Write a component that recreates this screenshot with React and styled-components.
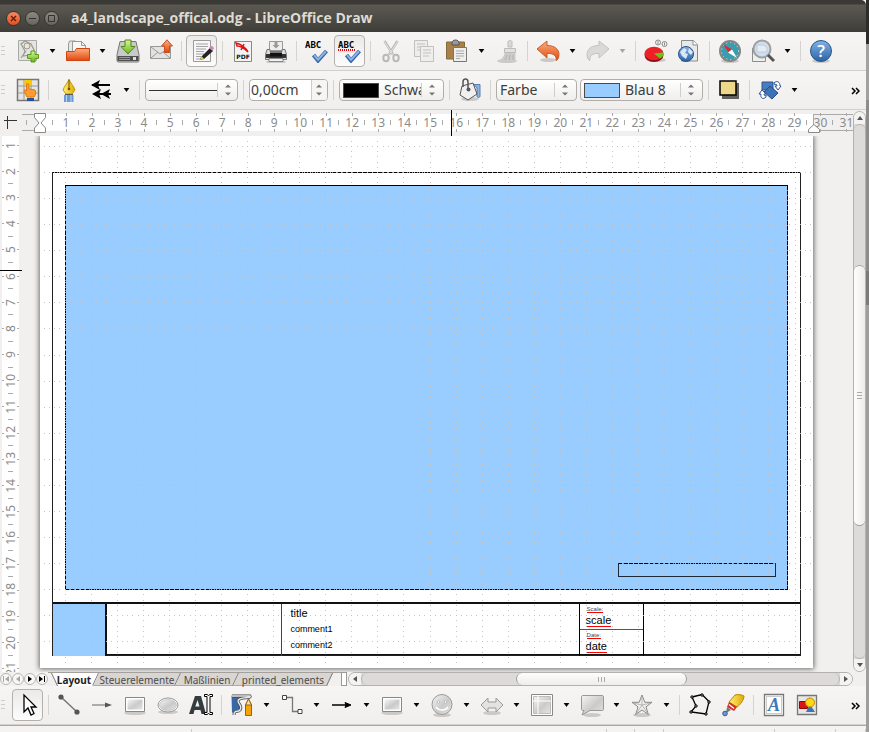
import React from "react";
import styled, { createGlobalStyle, css } from "styled-components";

const GlobalStyle = createGlobalStyle`
  * { box-sizing: border-box; }
  html, body { margin: 0; overflow: hidden; background: #969492; }
  body, button, input, select { font-family: "Noto Sans", "Open Sans", sans-serif; }
  button { border: 0; padding: 0; background: none; color: inherit; }
`;

/* ---------- window ---------- */
const Desktop = styled.div`
  min-height: 100vh;
  padding-right: 3px;
  background: linear-gradient(180deg, #2d2c29 0 44px, #a3a19f 44px 100px, #8e8c8a 100px 271px, #7c7a78 271px 305px, #a09e9c 305px);
`;
const Window = styled.main`
  display: flex;
  flex-direction: column;
  min-height: 100vh;
  background: #f1f0ee;
`;
const TitleBar = styled.header`
  display: flex;
  align-items: center;
  gap: 4px;
  height: 32px;
  padding: 4px 6px 0;
  border-radius: 0 5px 0 0;
  background: linear-gradient(180deg, #3a3935 0 4px, #5b5952 5px, #3e3d38 100%);
`;
const WindowButton = styled.button`
  display: grid;
  place-items: center;
  width: 15px;
  height: 15px;
  border-radius: 50%;
  border: 1px solid #33322e;
  background: ${(p) => (p.$close ? "linear-gradient(#f58a66, #e2501d)" : "linear-gradient(#8b8981, #66645d)")};
`;
const Title = styled.h1`
  margin: 0 0 0 8px;
  font-family: "Open Sans", "Noto Sans", sans-serif;
  font-size: 14px;
  line-height: 20px;
  font-weight: 700;
  color: #dfdbd2;
  white-space: nowrap;
`;

/* ---------- toolbars ---------- */
const Toolbar = styled.div`
  display: flex;
  align-items: center;
  height: 39px;
  border-bottom: 1px solid #d2d0cd;
  background: linear-gradient(180deg, #f6f5f4, #f0efed);
  overflow: hidden;
`;
const Grip = styled.span`
  flex: 0 0 11px;
  height: 10px;
  background: repeating-linear-gradient(180deg, #cfcdca 0 1px, transparent 1px 4px) 1px 0 / 4px 100% no-repeat;
`;
const ToolButton = styled.button`
  display: grid;
  place-items: center;
  flex: 0 0 31px;
  height: 32px;
  margin: 0 1px;
  border-radius: 4px;
  ${(p) => p.$on && css`
    border: 1px solid #b4b1ac;
    background: linear-gradient(180deg, #eceae8, #fcfcfc);
  `}
`;
const CaretButton = styled.button`
  display: grid;
  place-items: center;
  flex: 0 0 17px;
  height: 32px;
  color: ${(p) => (p.$off ? "#a5a3a0" : "#000")};
`;
const Divider = styled.span`
  flex: 0 0 8px;
  height: 20px;
  background: linear-gradient(#d5d3d0, #d5d3d0) 4px 0 / 1px 100% no-repeat;
`;
const More = styled.button`
  margin-left: auto;
  width: 22px;
  height: 24px;
`;
const Field = styled.div`
  display: flex;
  align-items: center;
  flex: 0 0 ${(p) => p.$w}px;
  height: 22px;
  margin: 0 1px 0 2px;
  padding-left: ${(p) => (p.$white ? 1 : 3)}px;
  border: 1px solid #b1aea9;
  border-radius: 4px;
  background: ${(p) => (p.$white ? "#fff" : "linear-gradient(180deg, #fff, #efeeec)")};
  overflow: hidden;
`;
const fieldText = css`
  flex: 1 1 0;
  min-width: 0;
  height: 20px;
  padding: 0;
  border: 0;
  outline: 0;
  background: transparent;
  color: #3c3c3c;
  font-size: 14px;
  line-height: 20px;
`;
const Select = styled.select`
  ${fieldText}
  appearance: none;
  text-overflow: clip;
`;
const TextInput = styled.input`${fieldText}`;
const Swatch = styled.span`
  flex: 0 0 36px;
  height: 15px;
  margin-right: 5px;
  border: 1px solid #4a4a4a;
  background: ${(p) => p.$color};
`;
const LineSample = styled.span`
  flex: 0 0 68px;
  height: 1px;
  background: #333;
`;
const Stepper = styled.span`
  display: grid;
  place-items: center;
  flex: 0 0 ${(p) => p.$w || 22}px;
  padding-right: 2px;
  align-self: stretch;
  margin: ${(p) => (p.$full ? "0" : "3px 0")};
  border-left: 1px solid #cfcdca;
  background: ${(p) => (p.$full ? "#f6f5f4" : "none")};
`;

/* ---------- workspace ---------- */
const Workspace = styled.section`
  display: grid;
  grid-template-columns: 22px minmax(0, 1fr) 13px;
  grid-template-rows: 26px auto;
`;
const Corner = styled.div`
  padding: 5px 0 0 4px;
  line-height: 0;
`;
const HRuler = styled.div`
  position: relative;
  display: flex;
  padding: 3px 0 0;
  overflow: hidden;
  height: 26px;
`;
const RulerMargin = styled.div`
  flex: 0 0 ${(p) => p.$w}px;
  height: 17px;
  margin-top: 1px;
  border: solid #aaa;
  border-width: 1px 0 1px ${(p) => (p.$edge ? 1 : 0)}px;
  background: ${(p) => (p.$edge ? "none" : "linear-gradient(#aaa, #aaa) 4px 5px / 1px 5px no-repeat")};
`;
const HScale = styled.div`
  display: flex;
  flex: 1 1 0;
  min-width: 0;
  height: 19px;
  background: linear-gradient(#fff, #fff) 0 1px / 100% 17px no-repeat;
`;
const HHalf = styled.span`
  flex: 0 0 calc(100% / 59.4);
  background: linear-gradient(#aaa, #aaa) 100% 7px / 1px 5px no-repeat;
`;
const HCell = styled.span`
  position: relative;
  flex: 0 0 calc(100% / 29.7);
  text-align: center;
  font-size: 12px;
  line-height: 19px;
  color: #8b8b8b;
  background:
    linear-gradient(#aaa, #aaa) 50% 0 / 1px 3px no-repeat,
    linear-gradient(#aaa, #aaa) 50% 100% / 1px 3px no-repeat,
    linear-gradient(#aaa, #aaa) 100% 7px / 1px 5px no-repeat;
`;
const Indent = styled.span`
  position: absolute;
  top: 3px;
  line-height: 0;
  ${(p) => (p.$end ? "right: 33px;" : "left: 12px;")}
`;
const PointerMark = styled.span`
  position: absolute;
  background: #000;
  ${(p) => (p.$v ? "left: 0; right: 0; top: 134px; height: 1px;" : "top: 0; bottom: 0; left: 429px; width: 1px;")}
`;
const VRuler = styled.div`
  position: relative;
  overflow: hidden;
  contain: size;
`;
const VScale = styled.div`
  display: flex;
  flex-direction: column;
  height: calc(100% + 14px);
  margin: -4px 3px 0 2px;
  background: #fff;
`;
const VCell = styled.span`
  display: grid;
  place-items: center;
  flex: 1 1 0;
  min-height: 0;
  background:
    linear-gradient(#aaa, #aaa) 0 50% / 2px 1px no-repeat,
    linear-gradient(#aaa, #aaa) 100% 50% / 2px 1px no-repeat,
    linear-gradient(#aaa, #aaa) 50% 100% / 5px 1px no-repeat;
`;
const VNumber = styled.span`
  writing-mode: vertical-rl;
  transform: rotate(180deg);
  font-size: 12px;
  line-height: 17px;
  color: #8b8b8b;
`;
const Canvas = styled.div`
  padding: 0 40px 4px 18px;
  overflow: hidden;
  background: #f1f0ee;
`;
const Page = styled.article`
  position: relative;
  display: flex;
  aspect-ratio: 773 / 532;
  padding: 36px 12px 12px;
  background: #fff;
  box-shadow: 0 0 5px 1px #6d6b69;
`;
const dashH = "repeating-linear-gradient(90deg, #000 0 4px, #8a8a8a 4px 5px)";
const dashV = "repeating-linear-gradient(180deg, #000 0 4px, #8a8a8a 4px 5px)";
const Frame = styled.div`
  display: flex;
  flex: 1;
  flex-direction: column;
  border: solid #222;
  border-width: 0 1px 1px;
  background: ${dashH} 0 0 / 100% 1px no-repeat;
`;
const DrawArea = styled.div`
  display: flex;
  flex: 1;
  align-items: flex-end;
  justify-content: flex-end;
  margin: 13px 12px 12px;
  padding: 13px 12px;
  border-top: 1px solid #000;
  background:
    ${dashV} 0 0 / 1px 100% no-repeat,
    ${dashV} 100% 0 / 1px 100% no-repeat,
    ${dashH} 0 100% / 100% 1px no-repeat,
    #99ccff;
`;
const EmptyBox = styled.div`
  width: 158px;
  height: 14px;
  border: solid #1c2a38;
  border-width: 0 1px 1px;
  background: ${dashH} 0 0 / 100% 1px no-repeat;
`;
const TitleBlock = styled.div`
  display: grid;
  grid-template-columns: 54fr 176fr 298fr 65fr 156fr;
  height: 53px;
  border: solid #111;
  border-width: 2px 0 1px;
`;
const Cell = styled.div`
  border-right: ${(p) => p.$line || 0}px solid ${(p) => p.$ink || "#444"};
  background: ${(p) => p.$fill || "transparent"};
  padding: ${(p) => p.$pad || "0"};
  font-family: "Liberation Sans", Arial, sans-serif;
  color: #000;
`;
const Half = styled.div`
  height: 26px;
  padding: 2px 0 0 6px;
  border-bottom: ${(p) => (p.$rule ? 1 : 0)}px solid #555;
`;
const Line = styled.p`
  margin: 0;
  font-size: ${(p) => p.$size}px;
  line-height: 16px;
`;
const Checked = styled.span`
  display: block;
  width: fit-content;
  margin-left: ${(p) => (p.$small ? 1 : 0)}px;
  font-size: ${(p) => (p.$small ? 6 : 11)}px;
  line-height: ${(p) => (p.$small ? 6 : 11)}px;
  border-bottom: 1px solid #f00;
  color: ${(p) => (p.$small ? "#445" : "#000")};
  & + & { margin-top: 2px; }
`;
const GridOverlay = styled.svg`
  position: absolute;
  inset: 0;
  width: 100%;
  height: 100%;
  pointer-events: none;
`;

/* ---------- scroll bars ---------- */
const ScrollBar = styled.div`
  display: flex;
  flex-direction: ${(p) => (p.$v ? "column" : "row")};
  border: 1px solid #b5b2ae;
  border-radius: 7px;
  background: #dddbd9;
  color: #555;
  overflow: hidden;
  ${(p) => (p.$v ? "grid-column: 3; grid-row: 1 / 3; margin-top: 1px;" : "flex: 1; height: 14px; margin-right: 13px;")}
`;
const ScrollArrow = styled.button`
  display: grid;
  place-items: center;
  flex: 0 0 12px;
  background: #f4f3f2;
`;
const Track = styled.div`
  display: grid;
  flex: 1;
  ${(p) => (p.$v ? "grid-template-rows: 141fr 263fr 133fr;" : "grid-template-columns: 155fr 171fr 153fr;")}
  border: solid #b5b2ae;
  border-width: ${(p) => (p.$v ? "1px 0" : "0 1px")};
  border-radius: 7px;
`;
const Thumb = styled.div`
  display: grid;
  place-items: center;
  border: solid #a19e9a;
  border-width: ${(p) => (p.$v ? "1px 0" : "0 1px")};
  border-radius: 6px;
  background: linear-gradient(${(p) => (p.$v ? 90 : 180)}deg, #fdfdfd, #eeedeb);
  ${(p) => (p.$v ? "grid-row: 2;" : "grid-column: 2;")}
`;

/* ---------- sheet tabs ---------- */
const BottomRow = styled.div`
  display: flex;
  height: 14px;
  align-items: stretch;
`;
const NavButton = styled.button`
  display: grid;
  place-items: center;
  flex: 0 0 12px;
  height: 12px;
  margin: 1px 0 0;
  border: 1px solid #b9b6b2;
  border-radius: 6px;
  background: #f8f7f6;
  color: ${(p) => (p.$off ? "#a8a6a3" : "#000")};
`;
const TabList = styled.div`
  display: flex;
  flex: 0 0 293px;
  padding-left: 4px;
  border-top: 1px solid #a4a19d;
`;
const Tab = styled.button`
  position: relative;
  z-index: 0;
  flex: 0 0 ${(p) => p.$w}px;
  height: 13px;
  font-size: 10px;
  line-height: 12px;
  font-weight: ${(p) => (p.$active ? 700 : 400)};
  color: ${(p) => (p.$active ? "#222" : "#4c4c4c")};
  white-space: nowrap;
  &::before {
    content: "";
    position: absolute;
    z-index: -1;
    inset: 0 0 0 ${(p) => (p.$active ? 12 : 0)}px;
    transform: skewX(-25deg);
    border-right: 1px solid #777;
    border-bottom: 1px solid ${(p) => (p.$active ? "#fff" : "#aaa")};
    background: ${(p) => (p.$active ? "#fff" : "#d8d5d2")};
  }
  &::after {
    content: "";
    position: absolute;
    z-index: -1;
    inset: 0 12px 0 2px;
    transform: skewX(25deg);
    display: ${(p) => (p.$active ? "block" : "none")};
    border-left: 1px solid #777;
    background: #fff;
  }
`;
const Splitter = styled.span`
  flex: 0 0 6px;
  margin-right: 1px;
  border: 1px solid #999;
  background: #fff;
`;
const StatusBar = styled.footer`
  display: flex;
  height: 7px;
  border-top: 1px solid #aaa8a5;
  padding-top: 3px;
  background: #f4f3f2;
`;
const StatusCell = styled.span`
  flex: ${(p) => p.$w} 1 0;
  border-right: 1px solid #cccac7;
  padding-left: ${(p) => p.$pad || 0}px;
  line-height: 0;
`;

/* ---------- icons ---------- */
const Svg = ({ children, w = 24, h = 24 }) => (
  <svg width={w} height={h} viewBox={`0 0 ${w} ${h}`} fill="none" aria-hidden="true">{children}</svg>
);
const HiddenSvg = styled.svg`
  position: absolute;
`;
const Defs = () => (
  <HiddenSvg width="0" height="0" aria-hidden="true">
    <defs>
      <linearGradient id="gray" x1="0" y1="0" x2="1" y2="1"><stop stopColor="#f5f5f5" /><stop offset=".55" stopColor="#cacaca" /><stop offset="1" stopColor="#e4e4e4" /></linearGradient>
      <linearGradient id="orange" x1="0" y1="0" x2="0" y2="1"><stop stopColor="#fbb080" /><stop offset="1" stopColor="#e2470f" /></linearGradient>
      <linearGradient id="green" x1="0" y1="0" x2="0" y2="1"><stop stopColor="#d8f59a" /><stop offset="1" stopColor="#67b51c" /></linearGradient>
      <linearGradient id="blue" x1="0" y1="0" x2="0" y2="1"><stop stopColor="#82b3e6" /><stop offset="1" stopColor="#2c62a4" /></linearGradient>
      <linearGradient id="gold" x1="0" y1="0" x2="1" y2="0"><stop stopColor="#fff27a" /><stop offset="1" stopColor="#e2a800" /></linearGradient>
    </defs>
  </HiddenSvg>
);
const Shadow = ({ y = 22, rx = 9 }) => <ellipse cx="12" cy={y} rx={rx} ry="2" fill="#000" opacity=".16" />;
const AbcLabel = () => <text x="0" y="9" fontSize="9" fontWeight="700" fontFamily="DejaVu Sans Mono" fill="#000">ABC</text>;
const BlueCheck = () => <><path d="M8.500 16l4.500 5.500L21.500 12" stroke="#3566a4" strokeWidth="4" /><path d="M9 16.200l4 4.500 8-8.500" stroke="#8bb5ea" strokeWidth="2" /></>;

const icons = {
  newDoc: <><path d="M2.5 1.5h18v20h-18z" fill="#e4e4e1" stroke="#a8a8a4" /><path d="M5 5l4-3 6 3 3 6-4 5-7 1 2-5zM5 19l5-7" stroke="#9a9a90" strokeWidth="1.2" /><circle cx="11" cy="7" r="3" fill="#efe6c8" stroke="#999" /><path d="M15 12h4v3.500h3.500v4H19V23h-4v-3.500h-3.500v-4H15z" fill="url(#green)" stroke="#5b9a1b" /></>,
  open: <><path d="M2.500 13V5l1-3h6l2 2h2v9z" fill="#e7e7e7" stroke="#999" /><path d="M6.500 2.500h9l4 4V14h-13z" fill="#f7f7f7" stroke="#999" /><path d="M15.500 2.500v4h4" stroke="#999" /><path d="M.5 21.500v-9h8l2-3h13v12z" fill="url(#orange)" stroke="#cf450f" /></>,
  save: <><path d="M4 2.500h16l3 13v6c0 1-.5 1.500-1.500 1.500h-19C1.500 23 1 22.500 1 21.500v-6z" fill="#c9c9c9" stroke="#777" /><path d="M1.500 17h21v5h-21z" fill="#4f4f4f" /><path d="M3 18.500h11M3 20.500h11" stroke="#999" /><path d="M17 18h3v3h-3z" fill="#ddd" /><path d="M9 1h6v6.500h4L12 15 5 7.500h4z" fill="url(#green)" stroke="#4f8a16" /></>,
  mail: <><path d="M1.500 7.500h20v12h-20z" fill="#e2e2e2" stroke="#999" /><path d="M2 8l9 7 10-7M2 19l7-6M21 19l-7-6" stroke="#999" /><path d="M15.500 13.500V7h-3L18 .8 23.500 7h-3v6.500z" fill="url(#orange)" stroke="#c94d18" /></>,
  edit: <><path d="M3.500 1.500h17v21h-17z" fill="#f7f7f7" stroke="#9a9a9a" /><path d="M6 5h12M6 7.500h12M6 10h10M6 12.500h8M6 15h8M6 17.500h5M6 20h5" stroke="#a2a2a2" /><path d="M11 18l9-9 3 3-9 8-4 1z" fill="#222" /><path d="M11.500 17l2.500 3-4 1z" fill="#edca45" /><path d="M19 9l2-2c1-.5 3 1 3 2.500l-2 2z" fill="#d184b8" /></>,
  pdf: <><path d="M3.500 2.500h17v20h-17z" fill="#f4f4f4" stroke="#888" /><path d="M5 4c5 1 10 5 12 9-4-4-7-6-11-6zM13 5l-3 6" stroke="#e01414" strokeWidth="1.500" /><text x="12" y="20" textAnchor="middle" fontSize="6" fontWeight="700" fontFamily="DejaVu Sans" fill="#111">PDF</text></>,
  print: <><Shadow y="23" rx="10" /><path d="M5.500 2.500h13v9h-13z" fill="#eee" stroke="#999" /><path d="M10.500 3h3v3h2L12 9.500 8.500 6h2z" fill="#999" /><path d="M3 10.500h3v2h12v-2h3l1.500 5v5h-21v-5z" fill="#ddd" stroke="#777" /><path d="M2 15h20v4H2z" fill="#333" /><path d="M6 13.500h12v4H6z" fill="#111" /><path d="M5 19.500h14v3H5z" fill="#f0f0f0" stroke="#888" /></>,
  abc: <><AbcLabel /><BlueCheck /></>,
  abcAuto: <><AbcLabel /><path d="M0 11h18" stroke="#e00" strokeWidth="2" strokeDasharray="1 1" /><BlueCheck /></>,
  cut: <g stroke="#b9b8b6"><path d="M5.500 2L14 15.500M18.500 2L10 15.500" strokeWidth="2.500" /><path d="M5.500 2.500L13.500 15M18.500 2.500L10.500 15" stroke="#e5e4e2" /><ellipse cx="7" cy="19" rx="2.700" ry="3.200" strokeWidth="2" /><ellipse cx="17" cy="19" rx="2.700" ry="3.200" strokeWidth="2" /></g>,
  copy: <g stroke="#c2c1bf"><path d="M2.500 1.500h13v16h-13z" fill="#ededeb" /><path d="M5 5h8M5 8h8M5 11h4" /><path d="M8.500 7.500h13v15h-13z" fill="#efeeed" /><path d="M11 11h8M11 14h8M11 17h6" /></g>,
  paste: <><path d="M1.500 3h18v17h-18z" fill="#a88049" stroke="#86683e" /><path d="M7 4c0-4 7-4 7 0v2H7z" fill="#999" stroke="#555" /><path d="M8.500 8.500h13v14h-13z" fill="#eee" stroke="#777" /><path d="M11 12h8M11 14.500h8M11 17h8M11 19.500h4" stroke="#aaa" /></>,
  brush: <><Shadow y="22" rx="10" /><path d="M13 8V3c0-2 4-2 4 0v5z" fill="#dad9d7" stroke="#bdbcba" /><path d="M9.500 9.500h11v4h-11z" fill="#e2e1df" stroke="#bdbcba" /><path d="M9.500 14h11v8H2c4-1 7-4 7.500-8z" fill="#cccbc9" /><path d="M12 16l-2 5M15 16l-1 5M18 16v5" stroke="#b3b2b0" /></>,
  undo: <><Shadow y="21" rx="8" /><path d="M1 10L11 2v4.500c8 0 12 4 12 9 0 4-2 6-3 6 1-5-3-7.500-9-7V19z" fill="url(#orange)" stroke="#c6612d" /></>,
  redo: <path d="M23 10L13 2v4.500c-8 0-12 4-12 9 0 4 2 6 3 6-1-5 3-7.500 9-7V19z" fill="#dad9d7" stroke="#c3c2c0" />,
  chart: <><Shadow y="21" rx="10" /><ellipse cx="10" cy="16" rx="9.500" ry="7" fill="#8a0c10" /><ellipse cx="10" cy="14.500" rx="9.500" ry="6.700" fill="#ee2027" /><path d="M10 14.500l9-1c1 3-1 5-3 6z" fill="#62c818" /><g fill="#f4f4f4" stroke="#888"><circle cx="14" cy="3.500" r="2.500" /><circle cx="20.500" cy="5" r="2.500" /><path d="M14 2v3M20.500 3.500v3" /></g></>,
  web: <><path d="M4.500 1.500h12l4 4V22h-16z" fill="#e9e9e8" stroke="#8b8b8b" /><path d="M16 1.500v4.500h5" stroke="#8b8b8b" fill="#fff" /><circle cx="9" cy="15" r="7.500" fill="url(#blue)" stroke="#275488" /><path d="M3 13l4-4 3 2-2 3 3 1-2 5-4-3zM12 9l4 4-2 3-3-3z" fill="#d8e8f9" /></>,
  compass: <><Shadow y="22" rx="9" /><circle cx="12" cy="12" r="10" fill="#399db0" stroke="#858585" strokeWidth="2" /><circle cx="12" cy="12" r="8.500" stroke="#d8e8eb" strokeDasharray="1 3" /><path d="M5 5l9 5.500-3.500 3z" fill="#e7252d" /><path d="M19 19L10 13.500l4-3z" fill="#fff" /></>,
  find: <><path d="M1.500 9h13v13.500h-13z" fill="#eee" stroke="#8d8d8d" /><circle cx="11" cy="10" r="8.500" fill="#cfdeed" stroke="#a0a0a0" strokeWidth="2" /><path d="M6 6h7l3 3v4H6z" fill="#e3ebf3" stroke="#bccbd9" /><path d="M17 16l6 6" stroke="#555" strokeWidth="3" /></>,
  help: <><Shadow y="22" rx="9" /><circle cx="12" cy="12" r="10.500" fill="url(#blue)" stroke="#245789" /><text x="12" y="18" textAnchor="middle" fontSize="17" fontFamily="Open Sans" fontWeight="600" fill="#fff">?</text></>,
  styles: <><path d="M1.500 1.500h21v21h-21z" fill="#e4e4e2" stroke="#777" strokeWidth="1.500" /><path d="M8 2v20M15 2v20M2 8h20M2 15h20" stroke="#999" /><path d="M8.500 2h6.500v6H8.500z" fill="#f6c900" /><path d="M10.500 6c1-1 2.500 0 2.500 1v4l6 1c1 1 1 5-1 7h-7l-3-6c0-2 1.500-1 2.500 0z" fill="#ff9c2f" stroke="#e07a12" /><path d="M11 20h7v3h-7z" fill="#244f93" /></>,
  pen: <><path d="M7 17h9.500v7H7z" fill="#6b9bd6" /><path d="M9.500 17v7M14 17v7" stroke="#b9d4f2" /><path d="M12 1c1 4 5 7 6 11l-3 4H9l-3-4c1-4 5-7 6-11z" fill="url(#gold)" stroke="#c99a00" /><path d="M12 2v8" stroke="#6b5206" /><circle cx="12" cy="11" r="1.300" fill="#6b5206" /><path d="M8 16.500h8" stroke="#555" /></>,
  arrowEnds: <><path d="M2 7h18M4 16h17" stroke="#000" strokeWidth="2" /><path d="M1 7l9-5-2 5 2 5zM2 16l9-5-2 5 2 5zM11 16l9-5-2 5 2 5z" fill="#000" /></>,
  bucket: <><Shadow y="21" rx="9" /><path d="M16 6.500h6V18c0 2-3 2-3 0v-8z" fill="#8eb3df" stroke="#577fae" /><path d="M4 8l11-3 4 11-9 6-8-5z" fill="#f0f0f0" stroke="#555" /><path d="M5 9V4c0-4 5-4 5 0v7" stroke="#555" strokeWidth="1.500" /><circle cx="10.500" cy="11.500" r="2" fill="#555" /></>,
  shadow: <><path d="M5 5h17v16H5z" fill="#000" opacity=".6" /><path d="M3 3h16v14H3z" fill="#ecd78b" stroke="#000" strokeWidth="1.500" /></>,
  rotate: <><path d="M4 4h11v8H4z" fill="#4a7cc0" stroke="#2b5590" /><path d="M12 8l8 7-6 6-8-7z" fill="#3c72b8" stroke="#244e88" /><path d="M16 5c3-3 6-1 6 3h1l-3 4-3-4h2c0-2-1-2-2-1zM8 19c-3 3-6 1-5-3H1l3-4 4 4H6c0 2 1 2 2 1z" fill="#fff" stroke="#2b5590" /></>,
  select: <path d="M8 2v17l4-4 3 7 3-1.500-3-6.500h5z" fill="#fff" stroke="#000" strokeWidth="1.300" />,
  line: <><path d="M4 4l16 15" stroke="#777" strokeWidth="1.500" /><circle cx="4" cy="4" r="2.600" fill="#555" /><circle cx="20" cy="19" r="2.600" fill="#555" /></>,
  lineArrow: <><path d="M2 12h15" stroke="#666" /><path d="M15 9.500l7 2.500-7 2.500z" fill="#555" /></>,
  rect: <><Shadow y="20" rx="11" /><path d="M2.500 4.500h19v14h-19z" fill="#fff" stroke="#888" /><path d="M4.500 6.500h15v10h-15z" fill="url(#gray)" /></>,
  ellipse: <><Shadow y="19" rx="10" /><ellipse cx="12" cy="12" rx="10" ry="7" fill="#fff" stroke="#999" /><ellipse cx="12" cy="12" rx="8.500" ry="5.500" fill="url(#gray)" stroke="#bbb" strokeWidth=".7" /></>,
  text: <><path d="M0 21L6 3h6l5 18h-4.500l-1-4h-6l-1 4zM6.300 13.500h4.200L8.500 7z" fill="#343c40" /><path d="M15.500 1.500H18l1.500 1 1.500-1h2.500v2H21v16h2.500v2H21l-1.500-1-1.500 1h-2.500v-2H18v-16h-2.500z" fill="#fff" stroke="#000" /></>,
  curve: <><path d="M1.500 2.500H15C7 4 4 9 11 14c1 2-6 3-9 6z" fill="#3769a8" /><path d="M2 3h18c2 3-12 0-12 5 0 3 5 5 2 9-2 3-6-1-6 5" stroke="#444" strokeWidth="3" /><path d="M2 3h18c2 3-12 0-12 5 0 3 5 5 2 9-2 3-6-1-6 5" stroke="#e4e4e4" strokeWidth="1.500" /><path d="M15.500 12l3-6 3 6v10.500h-6z" fill="#f5a30a" stroke="#9b650b" /><path d="M15.500 12l3-6 3 6z" fill="#f7dfae" stroke="#9b650b" /></>,
  connector: <><path d="M6 4.500h6.500v14H18" stroke="#777" strokeWidth="1.300" /><path d="M2.500 2.500h4v4h-4zM18 16.500h4v4h-4z" fill="#fff" stroke="#444" /></>,
  arrowBold: <><path d="M2 12h16" stroke="#000" strokeWidth="1.500" /><path d="M15 9.500l6 2.500-6 2.500 1-2.500z" fill="#000" stroke="#000" /></>,
  smiley: <><Shadow /><circle cx="12" cy="11.500" r="10" fill="url(#gray)" stroke="#999" /><circle cx="8.500" cy="9" r="1.300" fill="#fff" stroke="#bbb" /><circle cx="15.500" cy="9" r="1.300" fill="#fff" stroke="#bbb" /><path d="M6 14c3 4 9 4 12 0" stroke="#fff" strokeWidth="1.500" /></>,
  doubleArrow: <><Shadow y="20" /><path d="M1 12l7-7v4h8V5l7 7-7 7v-4H8v4z" fill="#e2e2e2" stroke="#999" /></>,
  table: <><path d="M1.500 1.500h21v21h-21z" fill="#fff" stroke="#888" /><path d="M3.500 3.500h17v17h-17z" fill="url(#gray)" stroke="#bbb" /><path d="M3 8h18M8 3v18" stroke="#fff" /></>,
  callout: <><Shadow /><path d="M3 2.500h19c1 0 1.500.5 1.500 1.500v12c0 1-.5 1.500-1.500 1.500H10L2 22l2-4.500H3c-1 0-1.500-.5-1.500-1.500V4c0-1 .5-1.500 1.500-1.500z" fill="url(#gray)" stroke="#999" /></>,
  star: <><Shadow /><path d="M12 2l2.800 7.300H22l-6 4.600 2.300 7.600L12 17l-6.300 4.500L8 13.900 2 9.300h7.200z" fill="#eee" stroke="#888" /><path d="M12 3v9l-9-2M12 12l9-2M12 12l6 9M12 12l-6 9" stroke="#aaa" strokeWidth=".8" /></>,
  points: <><path d="M4 4l10-2.500 7 7L18 21 3 19l5-6z" stroke="#000" strokeWidth="1.300" /><path d="M3 3h2v2H3zM13 1h2v2h-2zM20 8h2v2h-2zM17 20h2v2h-2zM2 18h2v2H2zM7 12h2v2H7z" fill="#fff" stroke="#000" /></>,
  glue: <><path d="M8 9l6-7c2-1 8 0 9 1 0 4-4 9-7 11z" fill="url(#gold)" stroke="#b68900" /><path d="M8 9l8 5-3 4-7-4z" fill="#d62b20" /><path d="M8 11.500l5 4" stroke="#fff" strokeWidth="1.500" /><path d="M6 14l4 3-5 3z" fill="#777" /><circle cx="4" cy="20.500" r="2.300" fill="#6d98cd" stroke="#335d96" /></>,
  fontwork: <><path d="M2.500 1.500h19v21h-19z" fill="#fff" stroke="#777" strokeWidth="1.300" /><path d="M4.500 3.500h15v17h-15z" stroke="#999" strokeDasharray="1 1" /><text x="12" y="18" textAnchor="middle" fontSize="18" fontStyle="italic" fontWeight="700" fontFamily="Liberation Serif" fill="#4078b6">A</text></>,
  gallery: <><path d="M2.500 2.500h19v19h-19z" fill="#e6e6e4" stroke="#777" strokeWidth="1.300" /><path d="M4.500 8.500h8v7h-8z" fill="#d91616" stroke="#8f0808" /><path d="M11 19l3-6h2l4 6z" fill="#3f73b5" /><circle cx="15" cy="9.500" r="4.500" fill="#ffd712" stroke="#b58c00" /></>,
};

const Caret = () => <svg width="7" height="4" viewBox="0 0 7 4" aria-hidden="true"><path d="M1 0h5L3.500 3.500z" fill="currentColor" stroke="currentColor" strokeWidth=".6" /></svg>;
const UpDown = () => <svg width="6" height="12" viewBox="0 0 6 12" aria-hidden="true"><path d="M0 3.500L3 .5l3 3zM0 8.500h6l-3 3z" fill="#777" /></svg>;
const Chevrons = () => <svg width="9" height="8" viewBox="0 0 9 8" fill="none" aria-hidden="true"><path d="M1 1l3 3-3 3M5 1l3 3-3 3" stroke="#000" strokeWidth="1.500" /></svg>;
const arrowPaths = { left: "M5 0v6L1 3z", right: "M1 0v6l4-3z", up: "M0 5h6L3 1z", down: "M0 1h6L3 5z", first: "M6 0v6L2 3zM0 0h1v6H0z", last: "M0 0v6l4-3zM5 0h1v6H5z" };
const Arrow = ({ dir }) => <svg width="6" height="6" viewBox="0 0 6 6" aria-hidden="true"><path d={arrowPaths[dir]} fill="currentColor" /></svg>;

/* Each entry: an icon key, "|" for a divider, "v" or "v-" for an enabled or disabled menu arrow. */
const Tools = ({ items, on = [] }) =>
  items.map((item, i) => {
    if (item === "|") return <Divider key={i} />;
    if (item === "v" || item === "v-") return <CaretButton key={i} $off={item === "v-"} aria-label="Menu"><Caret /></CaretButton>;
    return <ToolButton key={i} $on={on.includes(item)} aria-label={item}><Svg>{icons[item]}</Svg></ToolButton>;
  });

const standard = ["newDoc", "v", "open", "v", "save", "mail", "|", "edit", "|", "pdf", "print", "|", "abc", "abcAuto", "|", "cut", "copy", "paste", "v", "brush", "|", "undo", "v", "redo", "v-", "|", "chart", "web", "|", "compass", "find", "v", "|", "help"];
const drawing = ["select", "|", "line", "lineArrow", "rect", "ellipse", "text", "|", "curve", "v", "connector", "v", "arrowBold", "v", "rect", "v", "smiley", "v", "doubleArrow", "v", "table", "v", "callout", "v", "star", "v", "|", "points", "glue", "|", "fontwork", "gallery"];

const range = (n) => Array.from({ length: n }, (_, i) => i + 1);

/* Snap grid: a dot every fifth of a centimetre; the middle columns are heavier inside the drawing area. */
const cm = 26.07;
const dot = (x, y) => `M${Math.floor(x)} ${Math.floor(y)}h1v1h-1z`;
const grid = (() => {
  let light = "";
  let heavy = "";
  for (let r = 1; r <= 20; r++) for (let k = 1; k < 149; k++) light += dot(k * cm / 5 - 1, r * cm - 15.6);
  for (let c = 1; c <= 29; c++) {
    for (let k = 4; k <= 104; k++) {
      const d = dot(c * cm - 1, k * cm / 5 - 15.6);
      if (c >= 7 && c <= 19 && k > 30 && k < 90) heavy += d;
      else light += d;
    }
  }
  return { light, heavy };
})();

export default function App() {
  return (
    <Desktop>
      <GlobalStyle />
      <Defs />
      <Window>
        <TitleBar>
          <WindowButton $close aria-label="Close"><svg width="7" height="7" viewBox="0 0 7 7"><path d="M1 1l5 5M6 1L1 6" stroke="#5a1e0b" strokeWidth="1.300" /></svg></WindowButton>
          <WindowButton aria-label="Minimize"><svg width="7" height="7" viewBox="0 0 7 7"><path d="M0 3.500h7" stroke="#33322e" /></svg></WindowButton>
          <WindowButton aria-label="Maximize"><svg width="7" height="7" viewBox="0 0 7 7" fill="none"><path d="M.5.5h6v6h-6z" stroke="#33322e" /></svg></WindowButton>
          <Title>a4_landscape_offical.odg - LibreOffice Draw</Title>
        </TitleBar>

        <Toolbar role="toolbar" aria-label="Standard">
          <Grip />
          <Tools items={standard} on={["edit", "abcAuto"]} />
        </Toolbar>

        <Toolbar role="toolbar" aria-label="Line and filling">
          <Grip />
          <Tools items={["styles", "|", "pen", "arrowEnds", "v", "|"]} />
          <Field $w={93}>
            <LineSample />
            <Select aria-label="Line style"><option value="solid" label=" " /></Select>
            <Stepper><UpDown /></Stepper>
          </Field>
          <Divider />
          <Field $w={79} $white>
            <TextInput aria-label="Line width" defaultValue="0,00cm" />
            <Stepper $full $w={16}><UpDown /></Stepper>
          </Field>
          <Divider />
          <Field $w={105}>
            <Swatch $color="#000" />
            <Select aria-label="Line color"><option>Schwarz</option></Select>
            <Stepper><UpDown /></Stepper>
          </Field>
          <Tools items={["|", "bucket", "|"]} />
          <Field $w={81}>
            <Select aria-label="Area style"><option>Farbe</option></Select>
            <Stepper><UpDown /></Stepper>
          </Field>
          <Field $w={123}>
            <Swatch $color="#99ccff" />
            <Select aria-label="Area color"><option>Blau 8</option></Select>
            <Stepper><UpDown /></Stepper>
          </Field>
          <Tools items={["|", "shadow", "|", "rotate", "v"]} />
          <More aria-label="More"><Chevrons /></More>
        </Toolbar>

        <Workspace>
          <Corner><svg width="14" height="14" viewBox="0 0 14 14"><path d="M0 5.500h13M3.500 1v13" stroke="#333" /></svg></Corner>
          <HRuler>
            <RulerMargin $w={18} />
            <HScale>
              <HHalf />
              {range(31).map((n) => <HCell key={n}>{n}</HCell>)}
            </HScale>
            <RulerMargin $w={40} $edge />
            <Indent><svg width="12" height="20" viewBox="0 0 12 20"><path d="M.5.5h11v4L7 10l4.500 5v4.500H.5V15L5 10 .5 4.500z" fill="#fff" stroke="#888" /></svg></Indent>
            <Indent $end><svg width="12" height="20" viewBox="0 0 12 20"><path d="M6 11.500l5.500 5v3H.5v-3z" fill="#fff" stroke="#888" /></svg></Indent>
            <PointerMark />
          </HRuler>
          <ScrollBar $v>
            <ScrollArrow aria-label="Scroll up"><Arrow dir="up" /></ScrollArrow>
            <Track $v><Thumb $v><svg width="5" height="7" viewBox="0 0 5 7"><path d="M0 .5h5M0 3.500h5M0 6.500h5" stroke="#aaa" /></svg></Thumb></Track>
            <ScrollArrow aria-label="Scroll down"><Arrow dir="down" /></ScrollArrow>
          </ScrollBar>
          <VRuler>
            <VScale>{range(21).map((n) => <VCell key={n}><VNumber>{n}</VNumber></VCell>)}</VScale>
            <PointerMark $v />
          </VRuler>
          <Canvas>
            <Page>
              <Frame>
                <DrawArea><EmptyBox /></DrawArea>
                <TitleBlock>
                  <Cell $fill="#99ccff" $line={2} $ink="#111" />
                  <Cell $line={1} />
                  <Cell $line={1} $ink="#000" $pad="1px 0 0 8px">
                    <Line $size={11}>title</Line>
                    <Line $size={9}>comment1</Line>
                    <Line $size={9}>comment2</Line>
                  </Cell>
                  <Cell $line={1} $ink="#000">
                    <Half $rule><Checked $small>Scale:</Checked><Checked>scale</Checked></Half>
                    <Half><Checked $small>Date:</Checked><Checked>date</Checked></Half>
                  </Cell>
                  <Cell />
                </TitleBlock>
              </Frame>
              <GridOverlay viewBox="0 0 773 532" preserveAspectRatio="none" aria-hidden="true">
                <g shapeRendering="crispEdges">
                  <path d={grid.light} fill="#bebebe" opacity=".9" />
                  <path d={grid.heavy} fill="#cdbcac" />
                </g>
              </GridOverlay>
            </Page>
          </Canvas>
        </Workspace>

        <BottomRow>
          <NavButton $off aria-label="First page"><Arrow dir="first" /></NavButton>
          <NavButton $off aria-label="Previous page"><Arrow dir="left" /></NavButton>
          <NavButton aria-label="Next page"><Arrow dir="right" /></NavButton>
          <NavButton aria-label="Last page"><Arrow dir="last" /></NavButton>
          <TabList role="tablist">
            <Tab role="tab" aria-selected="true" $active $w={44}>Layout</Tab>
            <Tab role="tab" $w={82}>Steuerelemente</Tab>
            <Tab role="tab" $w={58}>Maßlinien</Tab>
            <Tab role="tab" $w={94}>printed_elements</Tab>
          </TabList>
          <Splitter />
          <ScrollBar>
            <ScrollArrow aria-label="Scroll left"><Arrow dir="left" /></ScrollArrow>
            <Track><Thumb><svg width="7" height="5" viewBox="0 0 7 5"><path d="M.5 0v5M3.500 0v5M6.500 0v5" stroke="#aaa" /></svg></Thumb></Track>
            <ScrollArrow aria-label="Scroll right"><Arrow dir="right" /></ScrollArrow>
          </ScrollBar>
        </BottomRow>

        <Toolbar role="toolbar" aria-label="Drawing">
          <Grip />
          <Tools items={drawing} on={["select"]} />
          <More aria-label="More"><Chevrons /></More>
        </Toolbar>

        <StatusBar>
          <StatusCell $w={197} />
          <StatusCell $w={413} $pad={13}><svg width="220" height="3" viewBox="0 0 220 3"><path d="M0 1h1v2H0z" fill="#00c" /><path d="M205 0h2v1h-2zM209 0h2v1h-2zM206 2h2v1h-2zM211 2h2v1h-2z" fill="#222" /></svg></StatusCell>
          <StatusCell $w={22} $pad={5}><svg width="10" height="3" viewBox="0 0 10 3"><path d="M.5 3V.5h9V3M5 0v3" fill="none" stroke="#6a5acd" /></svg></StatusCell>
          <StatusCell $w={29} />
          <StatusCell $w={113} />
          <StatusCell $w={62} />
          <StatusCell $w={30} />
        </StatusBar>
      </Window>
    </Desktop>
  );
}
